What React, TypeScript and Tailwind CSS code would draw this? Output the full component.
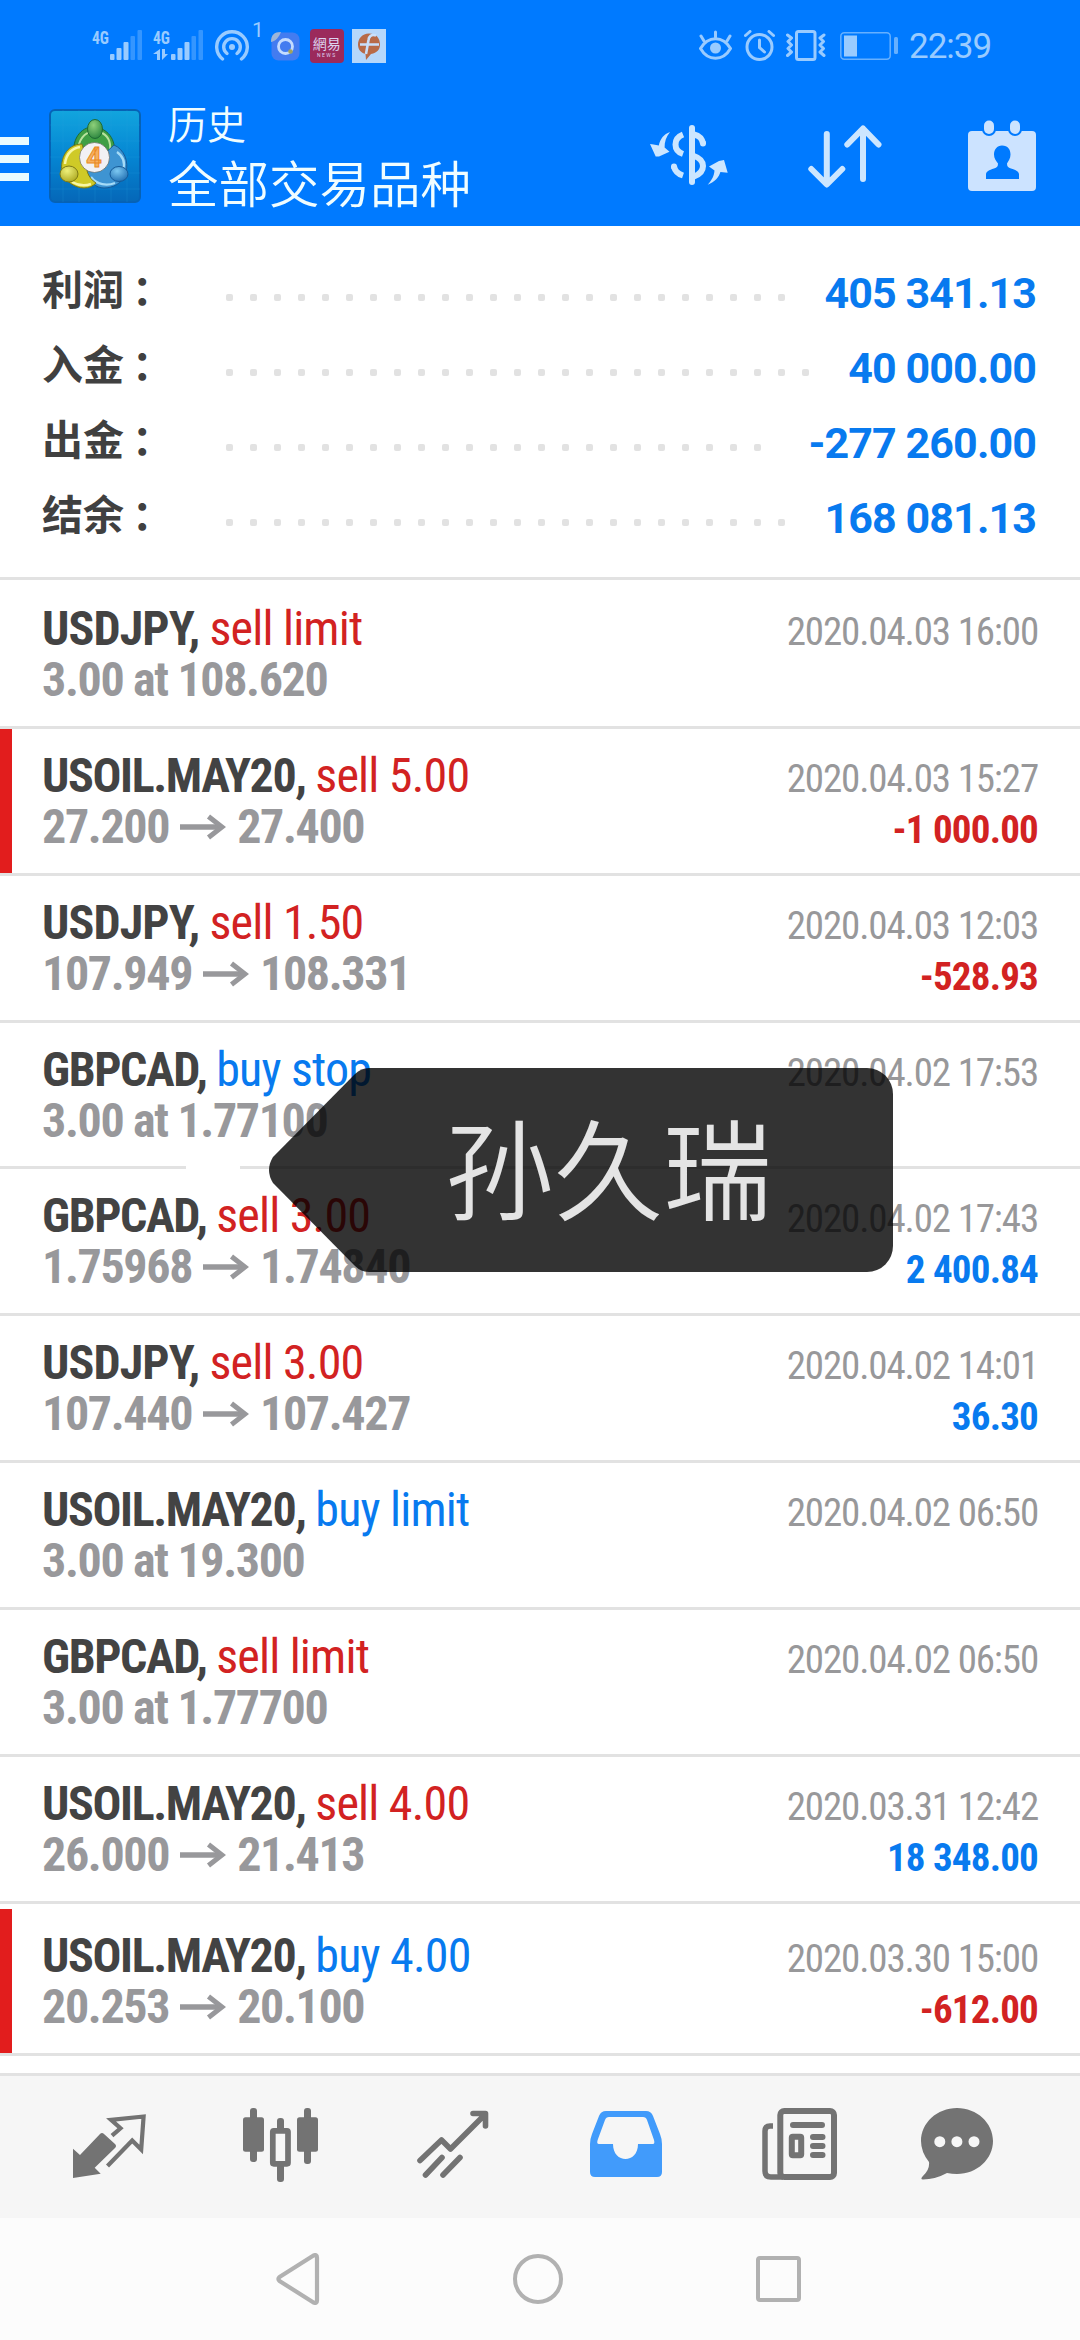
import type { ReactNode } from "react";

type Side = "buy" | "sell";

interface Deal {
  symbol: string;
  side: Side;
  action: string;
  details: string[];
  date: string;
  profit?: string;
  marked?: boolean;
}

interface SummaryItem {
  label: string;
  value: string;
  dots: number;
}

const summary: SummaryItem[] = [
  { label: "利润", value: "405 341.13", dots: 24 },
  { label: "入金", value: "40 000.00", dots: 25 },
  { label: "出金", value: "-277 260.00", dots: 23 },
  { label: "结余", value: "168 081.13", dots: 24 },
];

// details: either a pending order text or the open and close prices
const deals: Deal[] = [
  { symbol: "USDJPY", side: "sell", action: "sell limit", details: ["3.00 at 108.620"], date: "2020.04.03 16:00" },
  { symbol: "USOIL.MAY20", side: "sell", action: "sell 5.00", details: ["27.200", "27.400"], date: "2020.04.03 15:27", profit: "-1 000.00", marked: true },
  { symbol: "USDJPY", side: "sell", action: "sell 1.50", details: ["107.949", "108.331"], date: "2020.04.03 12:03", profit: "-528.93" },
  { symbol: "GBPCAD", side: "buy", action: "buy stop", details: ["3.00 at 1.77100"], date: "2020.04.02 17:53" },
  { symbol: "GBPCAD", side: "sell", action: "sell 3.00", details: ["1.75968", "1.74840"], date: "2020.04.02 17:43", profit: "2 400.84" },
  { symbol: "USDJPY", side: "sell", action: "sell 3.00", details: ["107.440", "107.427"], date: "2020.04.02 14:01", profit: "36.30" },
  { symbol: "USOIL.MAY20", side: "buy", action: "buy limit", details: ["3.00 at 19.300"], date: "2020.04.02 06:50" },
  { symbol: "GBPCAD", side: "sell", action: "sell limit", details: ["3.00 at 1.77700"], date: "2020.04.02 06:50" },
  { symbol: "USOIL.MAY20", side: "sell", action: "sell 4.00", details: ["26.000", "21.413"], date: "2020.03.31 12:42", profit: "18 348.00" },
  { symbol: "USOIL.MAY20", side: "buy", action: "buy 4.00", details: ["20.253", "20.100"], date: "2020.03.30 15:00", profit: "-612.00", marked: true },
];

// Signal strength with the network type above it
function Signal({ data }: { data?: boolean }) {
  return (
    <svg className="overflow-visible" width="50" height="32" viewBox="0 0 50 32" fill="#99cbff">
      <text x="0" y="14.500" fontSize="18" fontWeight="700" fontFamily="Roboto Condensed, Roboto, sans-serif" textLength="17" lengthAdjust="spacingAndGlyphs">
        4G
      </text>
      {data && <path d="M4 20v11H7V20L0 25h4M9 20v11l6-6h-3V20z" />}
      <rect x="18" y="25" width="4.500" height="6" rx="1" />
      <rect x="24.500" y="19" width="5" height="12" rx="1" />
      <rect x="31.500" y="13" width="5" height="18" rx="1" />
      <g opacity=".35">
        <rect x="38.500" y="7" width="4.500" height="24" rx="1" />
        <rect x="45.500" y="1" width="4.500" height="30" rx="1" />
      </g>
    </svg>
  );
}

function StatusBar() {
  return (
    <div className="flex h-[92px] items-start justify-between pr-[87px] pl-[92px] pt-[22px]">
      <div className="flex items-start">
        <div className="mt-[7px]"><Signal /></div>
        <div className="mt-[7px] ml-[11px]"><Signal data /></div>
        {/* Hotspot */}
        <svg className="mt-[7px] ml-3" width="34" height="33" viewBox="0 0 34 33" fill="none" stroke="#99cbff" strokeWidth="3.400" strokeLinecap="round">
          <path d="M7.500 30A15.300 15.300 0 1 1 26.500 30" />
          <path d="M12 24.500A8.300 8.300 0 1 1 22 24.500" />
          <circle cx="17" cy="18" r="3" fill="#99cbff" stroke="none" />
        </svg>
        <span className="ml-[3px] font-[Roboto] text-[21px] leading-[16px] text-[#99cbff]">1</span>
        {/* Browser */}
        <svg className="mt-[10px] ml-[7px]" width="29" height="29" viewBox="0 0 29 29">
          <rect x=".5" y=".5" width="28" height="28" rx="7" fill="#437cf0" />
          <path d="M0 10C0 3 3 0 10 0 8 5 5 9 0 10z" fill="#9db6d8" />
          <circle cx="14.500" cy="14.500" r="7" fill="none" stroke="#c4dcff" strokeWidth="2.800" />
          <circle cx="19.500" cy="19.500" r="2.300" fill="#a3a35c" />
        </svg>
        {/* News */}
        <div className="mt-[7px] ml-[10px] flex h-[34px] w-[34px] flex-col items-center rounded-[4px] bg-[#9b2a5b] pt-[5px] font-['Noto_Sans_CJK_TC',sans-serif] text-[#dcd5f0]">
          <span className="text-[14px] leading-[18px]">網易</span>
          <span className="font-[Roboto] text-[5px] leading-[7px] tracking-[1.5px]">NEWS</span>
        </div>
        <div className="mt-[7px] ml-2 h-[34px] w-[34px] bg-[#b5d7fb]">
          <svg width="34" height="34" viewBox="0 0 34 34">
            <path d="M17 4.500C10 4.500 6 10 6 15.500c0 5 3 8.500 7.500 9.500L14 31l5-6c6-1 9-4.500 9-9.500C28 9 24 4.500 17 4.500z" fill="#b86a48" />
            <path d="M24 6.500c-5-1.500-7 1-7.500 4.500l-2.500 14M8 15.500h19" fill="none" stroke="#c9e0fb" strokeWidth="2.600" />
          </svg>
        </div>
      </div>
      <div className="flex items-start pt-2">
        <svg width="33" height="31" viewBox="0 0 33 31" fill="none" stroke="#99cbff" strokeWidth="3" strokeLinecap="round" strokeLinejoin="round">
          <path d="M1.500 18.500C9 5.500 24 5.500 31.500 18.500 24 31.500 9 31.500 1.500 18.500zM16.500 2v5M2 6l3 5M31 6l-3 5" />
          <circle cx="16.500" cy="18" r="5.500" fill="#99cbff" stroke="none" />
        </svg>
        <svg className="ml-3" width="31" height="31" viewBox="0 0 31 31" fill="none" stroke="#99cbff" strokeWidth="3" strokeLinecap="round">
          <circle cx="15.500" cy="17" r="12.500" />
          <path d="M15.500 10v7.500l5 4.500M1.500 5.500L6 1.500M29.500 5.500L25 1.500" />
        </svg>
        <svg className="ml-[11px]" width="40" height="31" viewBox="0 0 40 31" fill="none" stroke="#99cbff" strokeWidth="3" strokeLinejoin="round" strokeLinecap="round">
          <rect x="10.500" y="1.500" width="18.500" height="28" rx="2" />
          <path d="M1.500 5l4 3-3.500 3.500 3.500 3.500L2 18.500 5.500 22l-4 3.500M38 5l-4 3 3.500 3.500L34 15l3.500 3.500L34 22l4 3.500" />
        </svg>
        <svg className="mt-[2px] ml-[14px]" width="58" height="28" viewBox="0 0 58 28">
          <rect x=".8" y=".8" width="49.400" height="26.400" rx="3.500" fill="none" stroke="#66b0ff" strokeWidth="1.500" />
          <rect x="4" y="3.500" width="13" height="21" fill="#99cbff" />
          <rect x="54" y="5" width="4" height="17" rx="1.500" fill="#66b0ff" />
        </svg>
        <span className="ml-[11px] w-[84px] font-[Roboto] text-[35px] leading-[34px] tracking-[-1px] text-[#99cbff]">22:39</span>
      </div>
    </div>
  );
}

// MetaTrader 4 launcher icon
function AppLogo() {
  return (
    <svg width="92" height="94" viewBox="0 0 92 94">
      <defs>
        <linearGradient id="tile" x1="0" y1="0" x2="0" y2="1">
          <stop offset="0" stopColor="#12a5de" />
          <stop offset=".5" stopColor="#0586d3" />
          <stop offset="1" stopColor="#0567b8" />
        </linearGradient>
        <radialGradient id="green" cx=".4" cy=".3" r=".8">
          <stop offset="0" stopColor="#8ed07a" />
          <stop offset="1" stopColor="#23803a" />
        </radialGradient>
        <radialGradient id="yellow" cx=".4" cy=".3" r=".8">
          <stop offset="0" stopColor="#eef07a" />
          <stop offset="1" stopColor="#a8a31a" />
        </radialGradient>
        <radialGradient id="blue" cx=".4" cy=".3" r=".8">
          <stop offset="0" stopColor="#7cc8f2" />
          <stop offset="1" stopColor="#1a68ad" />
        </radialGradient>
      </defs>
      <rect x="1" y="1" width="90" height="92" rx="5" fill="url(#tile)" stroke="#0662b5" strokeWidth="2" />
      <path d="M14 1v92M30 1v92M46 1v92M62 1v92M78 1v92M1 16h90M1 32h90M1 48h90M1 64h90M1 80h90" stroke="#2ba0e0" strokeOpacity=".2" />
      <path d="M25 48C22 27 35 17 45 18c13 1 23 12 20 29l-5 10-13-22z" fill="#3f9f45" stroke="#1d6b34" />
      <path d="M29 45c-1-15 8-22 14-22M51 23c8 3 11 10 10 19" fill="none" stroke="#b7e29d" strokeWidth="2" />
      <path d="M37 62l28-26c10 4 15 17 12 27-3 12-14 16-22 16-8 0-15-6-18-17z" fill="#3e94d2" stroke="#165a98" />
      <path d="M68 43c7 5 8 12 6 18M42 68c6 8 16 9 24 6" fill="none" stroke="#a5dbf7" strokeWidth="2.200" />
      <path d="M33 35C17 35 11 51 13 62c2 10 13 17 22 17 5 0 9-2 12-5-8-5-11-14-9-22z" fill="#cfca27" stroke="#7d7a15" />
      <path d="M16 55c1-11 8-16 15-17M23 73c7 4 13 4 19 2" fill="none" stroke="#f8f7a5" strokeWidth="2.500" />
      <ellipse cx="46" cy="20" rx="7.500" ry="9.500" fill="url(#green)" stroke="#1d6b34" />
      <ellipse cx="20" cy="65" rx="9" ry="8" fill="url(#yellow)" stroke="#7d7a15" />
      <ellipse cx="70" cy="65" rx="9" ry="7.500" fill="url(#blue)" stroke="#165a98" />
      <circle cx="45.500" cy="48.500" r="15" fill="#f2f1f4" stroke="#5c5c50" strokeOpacity=".6" />
      <text x="45" y="58" textAnchor="middle" fontSize="27" fontWeight="700" fontFamily="Roboto, sans-serif" fill="#f6b060" stroke="#ea8a25" strokeWidth="1">
        4
      </text>
    </svg>
  );
}

function Header() {
  return (
    <header className="h-[226px] bg-[#007aff]">
      <StatusBar />
      <div className="flex h-[134px] items-start">
        <div className="mt-[45px] flex w-[29px] flex-col gap-[10px]">
          <div className="h-2 bg-[#e9fbff]" />
          <div className="h-2 bg-[#e9fbff]" />
          <div className="h-2 bg-[#e9fbff]" />
        </div>
        <div className="mt-[17px] ml-5"><AppLogo /></div>
        <div className="ml-[27px] flex flex-1 flex-col pt-[7px] font-['Noto_Sans_CJK_SC',sans-serif] font-[350] text-[#f0fdff]">
          <span className="text-[39px] leading-[46px]">历史</span>
          <span className="text-[50.5px] leading-[72px]">全部交易品种</span>
        </div>
        <div className="flex pr-11">
          {/* Deposit / withdrawal filter */}
          <svg className="mt-[33px]" width="78" height="60" viewBox="0 0 78 60" fill="none" stroke="#cce6ff" strokeWidth="6">
            <path d="M42 3v54" strokeLinecap="round" />
            <path d="M33 9.500c-10 4-10 16 0 19.500M33 50.500c-6-2-8-4.500-9-9" />
            <path d="M24 42v-.5M53 18v.5" strokeLinecap="round" />
            <path d="M44 9.500c6 1.500 8 4 9 9M44 31c12 4 12 16 0 20.500" />
            <g fill="#cce6ff" stroke="none">
              <path d="M20 7C16 12 14.500 17 14.600 22.500L19.500 26.700 9 31.500H5.700L0 19l3.500.5L8.800 20.500C10 14 14 9 20 7z" />
              <path d="M57.700 59.700C62 55 64 51 64.500 45.500L59 41.500 69 36l5-1 3.700 12.700L70.400 47C69 52 65 57 57.700 59.700z" />
            </g>
          </svg>
          <svg className="mt-[33px] ml-20" width="74" height="63" viewBox="0 0 74 63" fill="none" stroke="#cce6ff" strokeWidth="6" strokeLinecap="round" strokeLinejoin="round">
            <path d="M18.800 9v50M3.300 44l15.500 15.500L34.300 44" />
            <path d="M55 54V4M39.300 19.500L55 3.500l15.500 16" />
          </svg>
          <svg className="mt-7 ml-[86px]" width="68" height="72" viewBox="0 0 68 72">
            <rect y="11" width="68" height="60" rx="4" fill="#cce3ff" />
            <rect x="14" y="-2" width="14" height="18" rx="7" fill="#007aff" />
            <rect x="40" y="-2" width="14" height="18" rx="7" fill="#007aff" />
            <rect x="16" y=".5" width="10" height="13.500" rx="5" fill="#cce3ff" />
            <rect x="42" y=".5" width="10" height="13.500" rx="5" fill="#cce3ff" />
            <path d="M34 25.500c6 0 8.500 4 8.500 9 0 4-2 6-3.500 9 0 3 1 4 4 5 5 1.500 8 3 8 6V59H18v-4.500c0-3 3-4.500 8-6 3-1 4-2 4-5-2-3-4-5-4-9 0-5 3-9 8-9z" fill="#007aff" />
          </svg>
        </div>
      </div>
    </header>
  );
}

function SummaryRow({ label, value, dots }: SummaryItem) {
  return (
    <div className="flex h-[75px] items-center">
      <span className="-mt-2 flex w-[184px] font-['Noto_Sans_CJK_SC',sans-serif] text-[41px] leading-[60px] font-bold text-[#404040]">
        {label}
        <span className="ml-[8px]">：</span>
      </span>
      <div className="mt-[13px] flex flex-1 gap-[17px]">
        {Array.from({ length: dots }, (_, i) => (
          <span key={i} className="size-[7px] rounded-[2px] bg-[#e2e2e2]" />
        ))}
      </div>
      <span className="mt-[5px] -mr-[1px] font-[Roboto] text-[43px] leading-[50px] font-bold tracking-[-0.9px] whitespace-nowrap text-[#087aef]">
        {value}
      </span>
    </div>
  );
}

function PriceArrow() {
  return (
    <svg className="mx-[11px] inline-block" width="46" height="26" viewBox="0 0 46 26" fill="none" stroke="currentColor" strokeWidth="5.500">
      <path d="M0 13h42" />
      <path d="M28.500 2.500L42 13 28.500 23.500" strokeWidth="5" />
    </svg>
  );
}

function DealRow({ deal, index }: { deal: Deal; index: number }) {
  const profitColor = deal.profit?.startsWith("-") ? "text-[#d22222]" : "text-[#087aef]";
  const heights = ["h-[149px] pt-[2px]", "h-[147px]", "h-[147px]", "h-[146px]"];
  const height = index === deals.length - 1 ? "h-[152px] pt-[5px]" : (heights[index] ?? "h-[147px]");

  return (
    <div className={`flex border-b-[3px] border-[#e2e2e2] ${height}`}>
      <div className={`w-3 ${deal.marked ? "bg-[#e21d1d]" : ""}`} />
      <div className="flex flex-1 justify-between pt-[21px] pr-[42px] pl-[30px] font-['Roboto_Condensed',Roboto,sans-serif]">
        <div className="text-[48px] leading-[51px] font-bold whitespace-nowrap">
          <div className="text-[#434343]">
            <span className={deal.symbol === "USDJPY" ? "tracking-[-0.9px]" : "tracking-[-1.4px]"}>{deal.symbol}, </span>
            <span className={`font-normal tracking-[-0.8px] ${deal.side === "buy" ? "text-[#087aef]" : "text-[#d22222]"}`}>{deal.action}</span>
          </div>
          <div className="flex items-center tracking-[-1.35px] text-[#98989b]">
            <span>{deal.details[0]}</span>
            {deal.details[1] && (
              <>
                <PriceArrow />
                <span>{deal.details[1]}</span>
              </>
            )}
          </div>
        </div>
        <div className="pt-1 text-right text-[39px] leading-[51px] whitespace-nowrap">
          <div className="tracking-[-1.15px] text-[#98989a]">{deal.date}</div>
          {deal.profit && <div className={`font-bold tracking-[-0.8px] ${profitColor}`}>{deal.profit}</div>}
        </div>
      </div>
    </div>
  );
}

// Owner label lying over the list
function NameTag() {
  return (
    <div className="absolute top-[1068px] left-[186px] h-[204px] w-[707px]">
      <div className="absolute top-[98px] left-0 h-[7px] w-[54px] bg-white" />
      <svg className="absolute top-0 left-[83px]" width="624" height="204" viewBox="0 0 624 204">
        <path d="M100 0h498a26 26 0 0 1 26 26v152a26 26 0 0 1-26 26H100q-8 0-14-6L4 115q-8-13 0-26L86 6q6-6 14-6z" fill="#000" fillOpacity=".8" />
      </svg>
      <div className="absolute -top-1 left-[259px] font-['Noto_Sans_CJK_SC',sans-serif] text-[109px] leading-[202px] font-[350] whitespace-nowrap text-[#e4e4e4]">
        孙久瑞
      </div>
    </div>
  );
}

function TabBar() {
  return (
    <nav className="flex h-[145px] items-start border-t-[3px] border-[#e2e2e2] bg-[#f6f6f6] pt-8 pl-[73px] text-[#737373]">
      <svg className="mt-[6px]" width="73" height="64" viewBox="0 0 73 64">
        <path d="M0 34.700L7 41 27 20q2-2 4 0l11 10q2 2 0 4L21.700 53.700l6 6L0 64z" fill="currentColor" />
        <path d="M39 21.700l8.500-7.400-9.500-8.500 32.600-3.300-2.400 33-9-9L34.500 52" fill="none" stroke="currentColor" strokeWidth="4.200" />
      </svg>
      <svg className="ml-[97px]" width="75" height="74" viewBox="0 0 75 74" fill="currentColor">
        <rect x="7" width="7" height="54" rx="3" />
        <rect y="9.300" width="21" height="34.500" rx="2.500" />
        <rect x="61" width="7" height="56" rx="3" />
        <rect x="54" y="9.300" width="21" height="34.500" rx="2.500" />
        <rect x="34" y="10" width="7" height="14" rx="3" />
        <rect x="34" y="56" width="7" height="18" rx="3" />
        <rect x="29.800" y="22.800" width="15.200" height="33" rx="1" fill="none" stroke="currentColor" strokeWidth="5.700" />
      </svg>
      <svg className="mt-[2px] ml-[99px]" width="72" height="68" viewBox="0 0 72 68" fill="none" stroke="currentColor" strokeWidth="5.600" strokeLinecap="round" strokeLinejoin="round">
        <path d="M3 50.500L24.500 30l9 9L68 4.500M56 3.500h12.500V16" />
        <path d="M25 47.500L8.500 65M43 47.500L26 65" />
      </svg>
      <svg className="mt-[3px] ml-[101px]" width="72" height="66" viewBox="0 0 72 66">
        <path fillRule="evenodd" d="M16 0h40q5 0 7 5l7 18q2 5 2 10v28q0 5-5 5H5q-5 0-5-5V33q0-5 2-10L9 5q2-5 7-5zM19 6q-3 0-4 3L8 28q-2 5 1 5h14c0 20 25 20 25 0h15q2 0 1-4L57 9q-1-3-4-3z" fill="#419bfb" />
      </svg>
      <svg className="ml-[100px]" width="75" height="72" viewBox="0 0 75 72" fill="none" stroke="currentColor" strokeWidth="6">
        <rect x="18.300" y="3" width="53.700" height="66" rx="4" />
        <path d="M11 18H8q-5 0-5 5v40q0 6 6 6h12" strokeWidth="5.500" />
        <path d="M31 17h29M51 29h9.500M51 38h9.500M51 47h9.500" strokeLinecap="round" />
        <rect x="29.800" y="28.800" width="9.400" height="18.400" rx="1" />
      </svg>
      <svg className="ml-[84px]" width="72" height="72" viewBox="0 0 72 72">
        <path d="M36 0c20 0 36 15 36 33S56 66 36 66q-5 0-10-1Q14 71.500 2 71.500q-3 0-.5-3Q9 62 8 54 0 44 0 33C0 15 16 0 36 0z" fill="currentColor" />
        <g fill="#f6f6f6">
          <circle cx="18.800" cy="33.700" r="5.500" />
          <circle cx="35.900" cy="33.700" r="5.500" />
          <circle cx="53" cy="33.700" r="5.500" />
        </g>
      </svg>
    </nav>
  );
}

// Android navigation keys
function SystemBar() {
  return (
    <div className="flex h-[122px] items-center bg-[#fcfcfc] pb-[1px] pl-[276px]">
      <svg width="44" height="52" viewBox="0 0 44 52" fill="none" stroke="#b1b1b1" strokeWidth="4.200" strokeLinejoin="round">
        <path d="M3.500 24Q1.500 26 3.500 28L37.500 49.500q3.500 1.500 3.500-2v-43q0-3.500-3.500-2z" />
      </svg>
      <div className="ml-[193px] size-[50px] rounded-full border-4 border-[#b1b1b1]" />
      <div className="ml-[193px] h-[46px] w-[45px] rounded-[4px] border-4 border-[#b1b1b1]" />
    </div>
  );
}

function Page({ children }: { children: ReactNode }) {
  return <div className="relative flex h-[2340px] w-[1080px] flex-col overflow-hidden bg-white">{children}</div>;
}

export default function App() {
  return (
    <Page>
      <Header />
      <section className="h-[354px] border-b-[3px] border-[#e2e2e2] pt-[27px] pr-[45px] pl-[42px]">
        {summary.map((item) => (
          <SummaryRow key={item.label} {...item} />
        ))}
      </section>
      <main className="h-[1493px]">
        {deals.map((deal, i) => (
          <DealRow key={deal.date + deal.symbol} deal={deal} index={i} />
        ))}
      </main>
      <TabBar />
      <SystemBar />
      <NameTag />
    </Page>
  );
}
